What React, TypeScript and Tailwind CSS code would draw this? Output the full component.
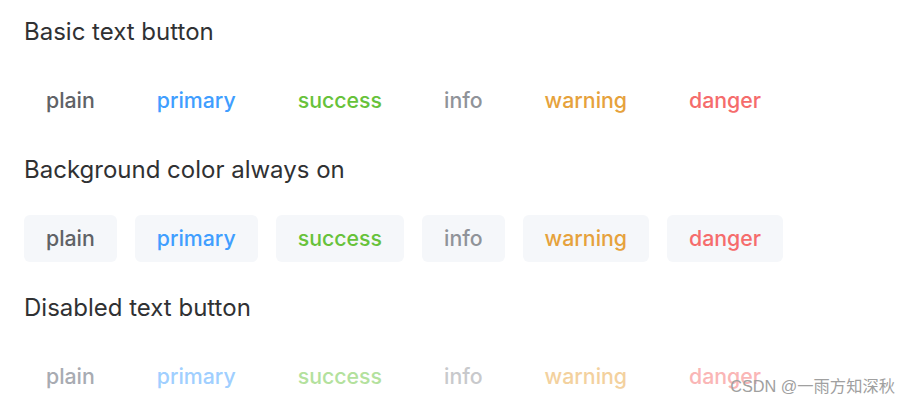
import React from "react";

const types = [
  { label: "plain", c: "text-[#606266]", d: "text-[#a8abb2]" },
  { label: "primary", c: "text-[#409eff]", d: "text-[#a0cfff]" },
  { label: "success", c: "text-[#67c23a]", d: "text-[#b3e19d]" },
  { label: "info", c: "text-[#909399]", d: "text-[#c8c9cc]" },
  { label: "warning", c: "text-[#e6a23c]", d: "text-[#f3d19e]" },
  { label: "danger", c: "text-[#f56c6c]", d: "text-[#fab6b6]" },
];

function Row({ mode }: { mode: "basic" | "bg" | "disabled" }) {
  return (
    <div className="flex gap-[18px]">
      {types.map((t) => (
        <button
          key={t.label}
          className={`h-[47px] px-[22px] rounded-[6px] flex items-center text-[21.3px] font-medium ${
            mode === "disabled" ? t.d : t.c
          } ${mode === "bg" ? "bg-[#f5f7fa]" : ""}`}
        >
          {t.label}
        </button>
      ))}
    </div>
  );
}

function Section({ title, mode }: { title: string; mode: "basic" | "bg" | "disabled" }) {
  return (
    <div className="flex flex-col">
      <h3 className="text-[24px] leading-[36px] text-[#303133] font-normal">{title}</h3>
      <div className="mt-[27px] mb-[28px]">
        <Row mode={mode} />
      </div>
    </div>
  );
}

export default function App() {
  return (
    <div
      className="relative w-[899px] h-[400px] overflow-hidden bg-white pl-[24px] pt-[14px]"
      style={{ fontFamily: "Inter, 'Noto Sans', sans-serif" }}
    >
      <Section title="Basic text button" mode="basic" />
      <Section title="Background color always on" mode="bg" />
      <Section title="Disabled text button" mode="disabled" />
      <div
        className="absolute right-[4px] top-[375px] text-[16.3px] leading-[22px] text-[#a0a0a0]"
        style={{ fontFamily: "'Liberation Sans', 'Noto Sans CJK SC', sans-serif" }}
      >
        CSDN @一雨方知深秋
      </div>
    </div>
  );
}
